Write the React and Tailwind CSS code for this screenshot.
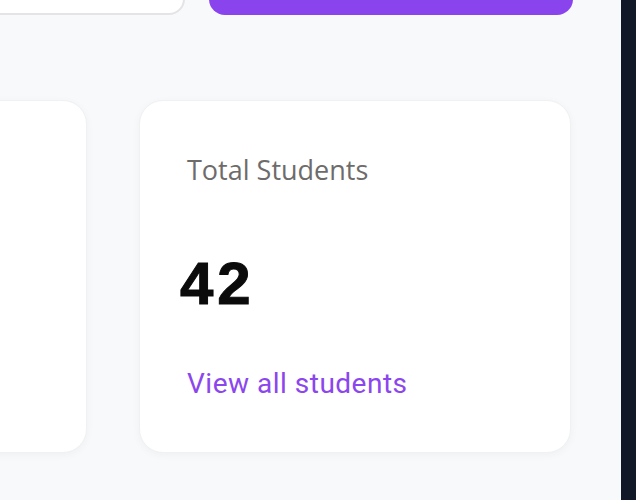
import React from "react";

const StatCard = ({ title, value, linkText }) => (
  <div className="w-[432px] h-[353px] shrink-0 bg-white rounded-[24px] border border-[#f0f1f3] shadow-[0_2px_8px_rgba(0,0,0,0.04)] px-[47px] pt-[49px]">
    <p className="text-[27px] leading-[40px] text-[#6e6b6b] font-['Open_Sans',sans-serif]">
      {title}
    </p>
    <p className="mt-[58px] ml-[-7px] text-[60px] leading-[72px] tracking-[4px] font-bold text-[#0b0b0b] font-['Liberation_Sans',Arial,sans-serif] [-webkit-text-stroke:1px_#0b0b0b]">
      {value}
    </p>
    <a
      href="#"
      className="block mt-[44px] text-[28px] leading-[40px] tracking-[0.5px] text-[#8b46ed] font-['Roboto',sans-serif]"
    >
      {linkText}
    </a>
  </div>
);

const App = () => {
  return (
    <div className="flex h-[500px] w-[636px] overflow-hidden">
      <main className="w-[621px] h-full bg-[#f8f9fb] overflow-hidden">
        {/* header row, scrolled partly out of view */}
        <div className="flex justify-end items-end gap-[24px] pr-[48px] mt-[-66px]">
          <div className="w-[420px] h-[80px] shrink-0 bg-white border-2 border-[#e4e4e6] rounded-[16px]" />
          <button className="w-[364px] h-[81px] shrink-0 bg-[#8a44ed] rounded-[16px]" />
        </div>

        <div className="flex justify-end gap-[52px] pr-[50px] mt-[85px]">
          <StatCard title="Total Classes" value="6" linkText="View all classes" />
          <StatCard title="Total Students" value="42" linkText="View all students" />
        </div>
      </main>
      <aside className="w-[15px] h-full bg-[#111827] shrink-0" />
    </div>
  );
};

export default App;
